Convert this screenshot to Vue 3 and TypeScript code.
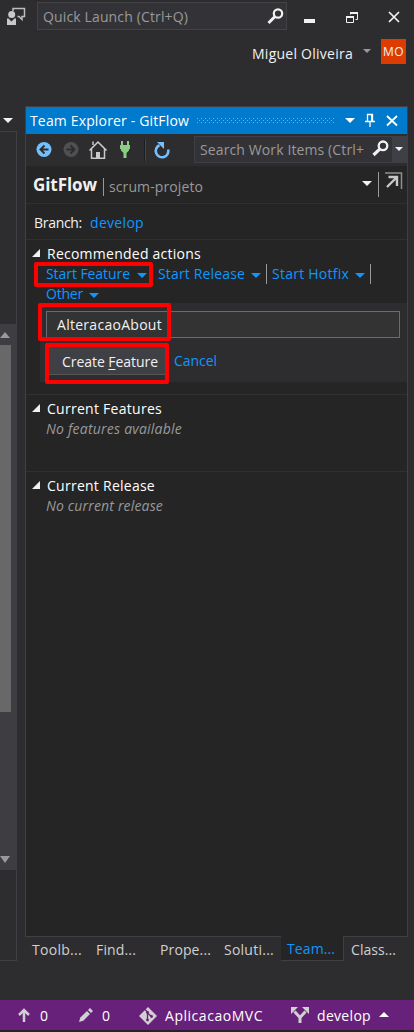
<script setup lang="ts">
import type { Directive } from 'vue'

// Tracks a label so that its glyphs fill exactly the given width in pixels.
const vFit: Directive<HTMLElement, number> = {
  mounted(el, { value }) {
    const natural = el.getBoundingClientRect().width
    const count = (el.textContent ?? '').trim().length
    el.style.letterSpacing = `${(value - natural) / count}px`
    el.style.width = `${value}px`
  },
}

interface Tab {
  label: string
  width: number
  cell: string
  active?: boolean
}

const tabs: Tab[] = [
  { label: 'Toolb...', width: 50, cell: 'c1' },
  { label: 'Find...', width: 40, cell: 'c2' },
  { label: 'Prope...', width: 51, cell: 'c3' },
  { label: 'Soluti...', width: 50, cell: 'c4' },
  { label: 'Team...', width: 48, cell: 'c5', active: true },
  { label: 'Class...', width: 45, cell: 'c6' },
]

const actions = [
  { label: 'Start Feature', width: 84, cell: 'a1' },
  { label: 'Start Release', width: 87, cell: 'a2' },
  { label: 'Start Hotfix', width: 77, cell: 'a3' },
]

const sections = [
  { title: 'Current Features', titleWidth: 115, note: 'No features available', noteWidth: 136 },
  { title: 'Current Release', titleWidth: 108, note: 'No current release', noteWidth: 117 },
]
</script>

<template>
  <div class="window">
    <header class="titlebar">
      <svg class="feedback" width="20" height="20" viewBox="0 0 20 20">
        <path d="M6 4V1.500h11.500v8h-2.500v3L12 9.500H10.500" fill="none" stroke="#bdbdbd" stroke-width="1.500" />
        <circle cx="4.700" cy="7.500" r="3.500" fill="#c8c8c8" />
        <path d="M0 11.500h1.500l3 3 3-3H9V18H0z" fill="#c8c8c8" />
      </svg>
      <div class="quick">
        <span v-fit="145" class="t">Quick Launch (Ctrl+Q)</span>
        <svg width="17" height="17" viewBox="0 0 17 17">
          <circle cx="11" cy="5.500" r="4.200" fill="none" stroke="#f1f1f1" stroke-width="2.200" />
          <path d="M8 8.500L1.500 15" stroke="#f1f1f1" stroke-width="3" />
        </svg>
      </div>
      <svg class="winbtns" width="98" height="14" viewBox="0 0 98 14">
        <path d="M0 8h11v4H0z" fill="#f1f1f1" />
        <path d="M46.500 3.500v-2h7v7h-2" fill="none" stroke="#f1f1f1" />
        <path d="M46 1h8v2h-8z" fill="#f1f1f1" />
        <path d="M42.500 5.500h7v6h-7z" fill="#2d2d30" stroke="#f1f1f1" />
        <path d="M42 5h8v2h-8z" fill="#f1f1f1" />
        <path d="M85 1l10 10M95 1L85 11" stroke="#f1f1f1" stroke-width="1.700" />
      </svg>
    </header>

    <div class="account">
      <span v-fit="101" class="t">Miguel Oliveira</span>
      <i class="caret grey" />
      <b class="avatar"><span v-fit="21">MO</span></b>
    </div>

    <div class="body">
      <aside class="dock">
        <i class="caret big" />
        <div class="dock-frame">
          <div class="scroll">
            <i class="up" />
            <div class="thumb" />
            <i class="down" />
          </div>
        </div>
      </aside>

      <main class="explorer">
        <div class="pane">
          <div class="pane-title">
            <span v-fit="159" class="t">Team Explorer - GitFlow</span>
            <svg class="grip" width="138" height="6" viewBox="0 0 138 6">
              <defs>
                <pattern id="dots" width="4" height="4" patternUnits="userSpaceOnUse">
                  <path d="M0 0h1v1H0zM2 2h1v1H2z" fill="#69b5e7" />
                </pattern>
              </defs>
              <rect width="138" height="5" fill="url(#dots)" />
            </svg>
            <i class="caret big" />
            <svg class="pin" width="10" height="15" viewBox="0 0 10 15">
              <path d="M2.500 8V1.500h5V8M0 8.500h10M5 9v5" fill="none" stroke="#fff" stroke-width="1.300" />
              <path d="M6 1h2v7H6z" fill="#fff" />
            </svg>
            <svg width="12" height="12" viewBox="0 0 12 12">
              <path d="M1 1l10 9.500M11 1L1 10.500" stroke="#fff" stroke-width="1.800" />
            </svg>
          </div>

          <div class="toolbar">
            <svg class="tools" width="136" height="20" viewBox="0 0 136 20">
              <circle cx="8" cy="9.500" r="7.500" fill="#75bfff" />
              <path d="M12.500 9.500H4.500M8.500 5.500L4.500 9.500l4 4" fill="none" stroke="#2d2d30" stroke-width="1.900" />
              <circle cx="35" cy="9.500" r="7.500" fill="#505052" />
              <path d="M30.500 9.500h8M34.500 5.500l4 4-4 4" fill="none" stroke="#2d2d30" stroke-width="1.900" />
              <path d="M53.500 10.500L62 2l8.500 8.500" fill="none" stroke="#d0d0d0" stroke-width="1.500" />
              <path d="M55.500 9v9.300h13V9M57 5V1.500" fill="none" stroke="#c8c8c8" stroke-width="1.500" />
              <path d="M60 12h4v6h-4z" fill="#c8c8c8" />
              <path d="M85 1h2v4h-2zM91 1h2v4h-2zM84 5h10v2H84zM85 8h8v2.500L90.500 13V18h-3v-5L85 10.500z" fill="#8bce83" />
              <path d="M84 6h10v3H84z" fill="#8bce83" />
              <path d="M108.500-1v22" stroke="#1d1d1f" />
              <path d="M109.500-1v22" stroke="#46464a" />
              <path d="M123.500 5.200A6.300 6.300 0 1 0 132.200 9.500" fill="none" stroke="#75bfff" stroke-width="2.600" />
              <path d="M121 2h7v7z" fill="#75bfff" />
            </svg>
            <div class="search">
              <span v-fit="164" class="t">Search Work Items (Ctrl+</span>
              <svg width="17" height="17" viewBox="0 0 17 17">
                <circle cx="11" cy="5.800" r="4.300" fill="none" stroke="#f1f1f1" stroke-width="2.300" />
                <path d="M8 8.800L1.500 15" stroke="#f1f1f1" stroke-width="3.200" />
              </svg>
            </div>
            <div class="search-drop"><i class="caret small" /></div>
          </div>

          <div class="heading">
            <strong v-fit="64">GitFlow</strong>
            <i class="bar" />
            <span v-fit="94" class="t project">scrum-projeto</span>
            <i class="caret big" />
            <i class="divider" />
            <svg width="18" height="18" viewBox="0 0 18 18">
              <path d="M0 1h16.500v16" fill="none" stroke="#8f8f91" stroke-width="1.500" />
              <path d="M3.500 5h8.500v9M12 5L2 15" fill="none" stroke="#c8c8c8" stroke-width="2.400" />
            </svg>
          </div>

          <div class="branch">
            <span v-fit="48" class="t">Branch:</span>
            <a v-fit="54" class="t">develop</a>
          </div>

          <section class="recommended">
            <h3><i class="tri" /><span v-fit="154">Recommended actions</span></h3>
            <div class="links">
              <span v-for="a in actions" :key="a.label" class="action" :class="a.cell">
                <a v-fit="a.width" class="t">{{ a.label }}</a>
                <i class="caret blue" />
              </span>
            </div>
            <div class="links second">
              <span class="action"><a v-fit="37" class="t">Other</a><i class="caret blue" /></span>
            </div>
            <div class="form">
              <div class="input"><span v-fit="105" class="t">AlteracaoAbout</span></div>
              <div class="buttons">
                <div class="button"><span v-fit="96" class="t">Create <u>F</u>eature</span></div>
                <a v-fit="43" class="t">Cancel</a>
              </div>
            </div>
            <i class="mark m1" />
            <i class="mark m2" />
            <i class="mark m3" />
          </section>

          <section v-for="s in sections" :key="s.title" class="plain">
            <h3><i class="tri" /><span v-fit="s.titleWidth">{{ s.title }}</span></h3>
            <p><em v-fit="s.noteWidth">{{ s.note }}</em></p>
          </section>
        </div>

        <nav class="tabs">
          <div v-for="t in tabs" :key="t.label" class="tab" :class="[t.cell, { active: t.active }]">
            <span v-fit="t.width" class="t">{{ t.label }}</span>
          </div>
        </nav>
      </main>
    </div>

    <footer class="status">
      <svg class="push" width="12" height="14" viewBox="0 0 12 14">
        <path d="M6 14V2.500M1 7l5-5 5 5" fill="none" stroke="#d0d0d0" stroke-width="2.500" />
      </svg>
      <span v-fit="9" class="t s1">0</span>
      <svg class="pencil" width="14" height="14" viewBox="0 0 14 14">
        <path d="M0 14l1.300-4.500L8 3l3 3-6.700 6.700zM9 2l2-2 3 3-2 2z" fill="#d0d0d0" />
      </svg>
      <span v-fit="9" class="t s2">0</span>
      <svg class="git" width="18" height="18" viewBox="0 0 18 18">
        <path d="M9 0l9 9-9 9-9-9z" fill="#d0d0d0" />
        <path d="M6 2.500L8.500 5v8M8.500 6l4 3.500" fill="none" stroke="#68217a" stroke-width="1.300" />
        <circle cx="8.500" cy="5.500" r="1.400" fill="#68217a" />
        <circle cx="8.500" cy="13" r="1.400" fill="#68217a" />
        <circle cx="12.500" cy="9.500" r="1.400" fill="#68217a" />
      </svg>
      <span v-fit="98" class="t s3">AplicacaoMVC</span>
      <svg class="fork" width="18" height="16" viewBox="0 0 18 16">
        <path d="M9 16v-5.500L3.500 4.500M9 10.500l5.500-6" fill="none" stroke="#d0d0d0" stroke-width="3" />
        <path d="M0 0h7L0 7zM18 0h-7l7 7z" fill="#d0d0d0" />
      </svg>
      <span v-fit="54" class="t s4">develop</span>
      <i class="caret-up" />
    </footer>
  </div>
</template>

<style>
body {
  background: #2d2d30;
}
</style>

<style scoped>
* {
  box-sizing: border-box;
}
.window {
  width: 414px;
  height: 1032px;
  display: flex;
  flex-direction: column;
  overflow: hidden;
  background: #2d2d30;
  border-bottom: 2px solid #242426;
  color: #f1f1f1;
  font: 14px/20px "Open Sans", "Noto Sans", sans-serif;
}
.t,
strong,
em,
h3 span,
.avatar span {
  display: inline-block;
  flex: none;
  white-space: nowrap;
}
svg,
i {
  display: block;
  flex: none;
}
a {
  color: #0e97ff;
}
.caret {
  width: 0;
  height: 0;
  border: 5px solid transparent;
  border-top-color: #f1f1f1;
  border-bottom: 0;
}
.caret.small {
  border-width: 4px 4px 0;
}
.caret.grey {
  border-width: 4px 4px 0;
  border-top-color: #999;
}
.caret.blue {
  border-top-color: #0e97ff;
}

.titlebar {
  display: flex;
  height: 39px;
  padding: 2px 0 0 7px;
}
.feedback {
  margin: 5px 10px 0 0;
}
.quick {
  display: flex;
  width: 250px;
  height: 28px;
  padding: 4px 2px 0 5px;
  justify-content: space-between;
  background: #333337;
  border: 1px solid #434346;
  color: #999;
}
.quick svg {
  margin-top: 1px;
}
.winbtns {
  margin: 9px 0 0 17px;
}
.account {
  display: flex;
  height: 67px;
  padding-left: 252px;
}
.account .t {
  margin-top: 5px;
}
.account .caret {
  margin: 10px 10px 0;
}
.avatar {
  display: flex;
  width: 25px;
  height: 25px;
  justify-content: center;
  align-items: center;
  background: #dc3c00;
  font-weight: 400;
  font-size: 12px;
}

.body {
  display: flex;
  height: 894px;
}
.dock {
  width: 25px;
}
.dock > .caret {
  margin: 12px 0 8px 3px;
}
.dock-frame {
  width: 17px;
  height: 830px;
  padding-top: 192px;
  border: solid #3f3f46;
  border-width: 1px 1px 1px 0;
}
.scroll {
  display: flex;
  flex-direction: column;
  width: 17px;
  height: 546px;
  padding-top: 8px;
  background: #3e3e42;
}
.up,
.down {
  width: 0;
  border: 5px solid transparent;
}
.up {
  border-width: 0 5px 6px;
  border-bottom-color: #999;
}
.thumb {
  width: 11px;
  height: 367px;
  margin: 7px 0 144px;
  background: #686868;
}
.down {
  border-width: 7px 5px 0;
  border-top-color: #999;
}

.explorer {
  width: 383px;
}
.pane {
  height: 831px;
  background: #252526;
  border: 1px solid #3f3f46;
}
.pane-title {
  display: flex;
  align-items: center;
  height: 27px;
  padding-left: 4px;
  background: #007acc;
  color: #fff;
}
.grip {
  margin: 0 10px 0 8px;
}
.pane-title .caret {
  margin-right: 10px;
  border-top-color: #fff;
}
.pin {
  margin-right: 11px;
}
.toolbar {
  display: flex;
  height: 32px;
  padding: 2px 0 4px 10px;
  background: #2d2d30;
}
.tools {
  margin: 4px 22px 0 0;
  overflow: visible;
}
.search {
  display: flex;
  width: 198px;
  height: 27px;
  padding: 3px 3px 0 5px;
  justify-content: space-between;
  background: #333337;
  border: 1px solid #3f3f46;
  border-right: 0;
  color: #999;
}
.search svg {
  margin-top: 0;
}
.search-drop {
  width: 15px;
  height: 27px;
  padding: 11px 0 0 3px;
  background: #3f3f46;
}
.heading {
  display: flex;
  height: 38px;
  padding-left: 7px;
  border-bottom: 1px solid #303032;
}
.heading strong {
  margin-top: 9px;
  font-size: 17px;
}
.bar {
  width: 1px;
  height: 18px;
  margin: 12px 5px 0 6px;
  background: #999;
}
.project {
  margin-top: 11px;
  color: #999;
}
.heading .caret {
  margin: 15px 6px 0 159px;
}
.divider {
  width: 1px;
  height: 25px;
  margin: 6px 6px 0 0;
  background: #999;
}
.heading svg {
  margin-top: 6px;
}
.branch {
  display: flex;
  gap: 8px;
  height: 36px;
  padding: 9px 0 0 8px;
  border-bottom: 1px solid #303032;
}
section {
  border-bottom: 1px solid #303032;
}
h3 {
  display: flex;
  margin: 0;
  font: 500 14px/20px "Open Sans", "Noto Sans", sans-serif;
  color: #fff;
}
.tri {
  width: 0;
  margin: 5px 7px 0 6px;
  border: solid transparent;
  border-width: 0 0 8px 8px;
  border-bottom-color: #f1f1f1;
}
h3 .tri {
  height: 0;
}
.recommended {
  position: relative;
  height: 155px;
  padding-top: 4px;
}
.links {
  display: flex;
  height: 20px;
  padding-left: 20px;
}
.action {
  display: flex;
  height: 20px;
}
.action .caret {
  margin: 9px 0 0 6px;
}
.a1 .caret {
  margin: 9px 11px 0 7px;
}
.a2,
.a3 {
  border-right: 1px solid #999;
}
.a2 .caret,
.a3 .caret {
  margin-right: 5px;
}
.a3 {
  padding-left: 5px;
}
.form {
  height: 79px;
  margin: -1px 0 0 14px;
  padding: 8px 7px 0 6px;
  background: #2d2d30;
}
.input {
  height: 27px;
  padding: 3px 0 0 10px;
  background: #333;
  border: 1px solid #6a6a74;
}
.buttons {
  display: flex;
  gap: 6px;
  margin: 8px 0 0 2px;
}
.button {
  width: 120px;
  height: 29px;
  padding: 5px 0 0 13px;
  background: #3f3f46;
  border: 1px solid #555;
}
.buttons > a {
  margin-top: 5px;
}
u {
  text-underline-offset: 2px;
}
.mark {
  position: absolute;
  border: 4px solid #fe0000;
  border-radius: 2px;
}
.m1 {
  left: 8px;
  top: 22px;
  width: 119px;
  height: 25px;
}
.m2 {
  left: 12px;
  top: 63px;
  width: 133px;
  height: 38px;
}
.m3 {
  left: 19px;
  top: 103px;
  width: 124px;
  height: 41px;
}
.plain {
  height: 77px;
  padding-top: 4px;
}
.plain:last-child {
  border: 0;
}
p {
  margin: 0;
  padding-left: 20px;
  color: #999;
}

.tabs {
  display: flex;
  height: 25px;
  margin-top: -1px;
  color: #d0d0d0;
}
.tab {
  padding: 4px 0 0 7px;
}
.c1 {
  width: 64px;
}
.c2 {
  width: 64px;
}
.c3 {
  width: 64px;
}
.c4 {
  width: 64px;
}
.c5 {
  width: 63px;
}
.tab.active {
  padding: 3px 0 0 6px;
  background: #252526;
  border: solid #3f3f46;
  border-width: 0 1px 1px 0;
  color: #0e97ff;
}

.status {
  display: flex;
  height: 30px;
  background: #68217a;
  color: #fff;
}
.status .t {
  margin-top: 6px;
}
.push {
  margin: 8px 10px 0 18px;
}
.pencil {
  margin: 8px 9px 0 30px;
}
.git {
  margin: 7px 8px 0 28px;
}
.fork {
  margin: 7px 8px 0 28px;
}
.caret-up {
  width: 0;
  height: 0;
  margin: 12px 0 0 8px;
  border: 5px solid transparent;
  border-top: 0;
  border-bottom-color: #fff;
}
</style>
